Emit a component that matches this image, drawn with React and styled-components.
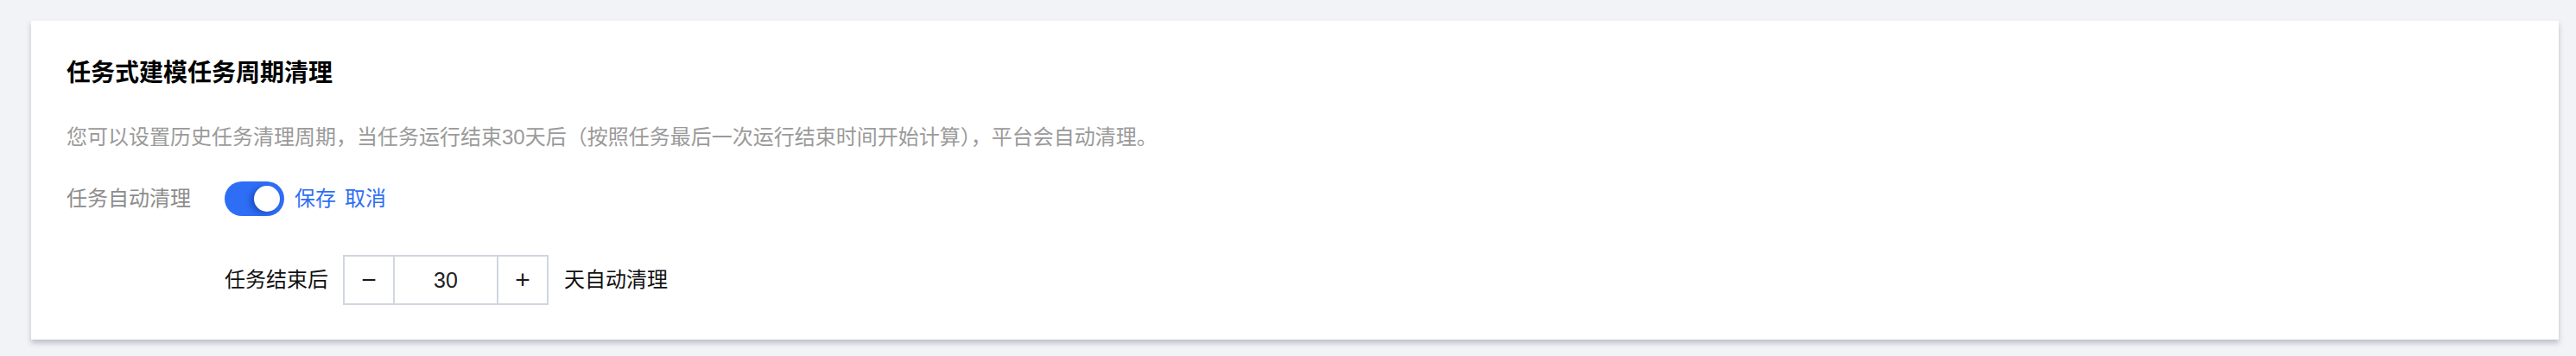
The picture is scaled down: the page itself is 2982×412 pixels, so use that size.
import React, { useState } from "react";
import styled, { createGlobalStyle } from "styled-components";

const GlobalStyle = createGlobalStyle`
  html, body {
    margin: 0;
    padding: 0;
    background: #f2f3f7;
  }
  body {
    font-family: "Liberation Sans", "Noto Sans CJK SC", sans-serif;
    -webkit-font-smoothing: antialiased;
  }
`;

const Page = styled.div`
  padding: 24px 20px 18px 36px;
`;

const Card = styled.section`
  background: #fff;
  padding: 40px 41px;
  box-shadow: 0 4px 6px 0 rgba(54, 58, 80, 0.28);
`;

const Title = styled.h2`
  margin: 0;
  font-size: 28px;
  line-height: 42px;
  font-weight: 700;
  color: #000;
`;

const Desc = styled.p`
  margin: 35px 0 0;
  font-size: 24px;
  line-height: 36px;
  color: #9a9a9a;
`;

const Row = styled.div`
  display: flex;
  align-items: center;
  margin-top: ${(p) => p.$gap}px;
  padding-left: ${(p) => p.$indent || 0}px;
`;

const Label = styled.span`
  width: 183px;
  font-size: 24px;
  line-height: 36px;
  color: #8c8c8c;
`;

const Track = styled.button`
  position: relative;
  width: 69px;
  height: 40px;
  border: 0;
  border-radius: 20px;
  padding: 0;
  background: ${(p) => (p.$on ? "#2e6ef5" : "#c7ccd6")};
  cursor: pointer;
`;

const Knob = styled.span`
  position: absolute;
  top: 5px;
  ${(p) => (p.$on ? "right: 5px;" : "left: 5px;")}
  width: 30px;
  height: 30px;
  border-radius: 50%;
  background: #fff;
  box-shadow: -4px 2px 6px rgba(10, 40, 140, 0.45);
`;

const Links = styled.div`
  display: flex;
  gap: 10px;
  margin-left: 12px;
`;

const TextLink = styled.a`
  font-size: 24px;
  line-height: 36px;
  color: #2e6ef5;
  text-decoration: none;
  cursor: pointer;
`;

const Text = styled.span`
  font-size: 24px;
  line-height: 36px;
  color: #111;
`;

const Stepper = styled.div`
  display: flex;
  height: 58px;
  margin: 0 18px 0 17px;
  border: 2px solid #d1d6e0;
  box-sizing: border-box;
`;

const StepButton = styled.button`
  width: 58px;
  border: 0;
  ${(p) => (p.$side === "left" ? "border-right" : "border-left")}: 2px solid #d1d6e0;
  background: #fff;
  font-family: "Liberation Sans", sans-serif;
  font-size: 30px;
  color: #1a1a1a;
  padding: 0;
  cursor: pointer;
`;

const StepInput = styled.input`
  width: 114px;
  border: 0;
  outline: none;
  text-align: center;
  font-family: "Liberation Sans", sans-serif;
  font-size: 25px;
  color: #222;
  background: #fff;
`;

export default function App() {
  const [on, setOn] = useState(true);
  const [days, setDays] = useState(30);

  return (
    <>
      <GlobalStyle />
      <Page>
        <Card>
          <Title>任务式建模任务周期清理</Title>
          <Desc>
            您可以设置历史任务清理周期，当任务运行结束30天后（按照任务最后一次运行结束时间开始计算），平台会自动清理。
          </Desc>
          <Row $gap={33}>
            <Label>任务自动清理</Label>
            <Track $on={on} onClick={() => setOn(!on)}>
              <Knob $on={on} />
            </Track>
            <Links>
              <TextLink>保存</TextLink>
              <TextLink>取消</TextLink>
            </Links>
          </Row>
          <Row $gap={45} $indent={183}>
            <Text>任务结束后</Text>
            <Stepper>
              <StepButton $side="left" onClick={() => setDays(Math.max(1, days - 1))}>
                −
              </StepButton>
              <StepInput
                value={days}
                onChange={(e) => setDays(Number(e.target.value) || 0)}
              />
              <StepButton $side="right" onClick={() => setDays(days + 1)}>
                +
              </StepButton>
            </Stepper>
            <Text>天自动清理</Text>
          </Row>
        </Card>
      </Page>
    </>
  );
}
